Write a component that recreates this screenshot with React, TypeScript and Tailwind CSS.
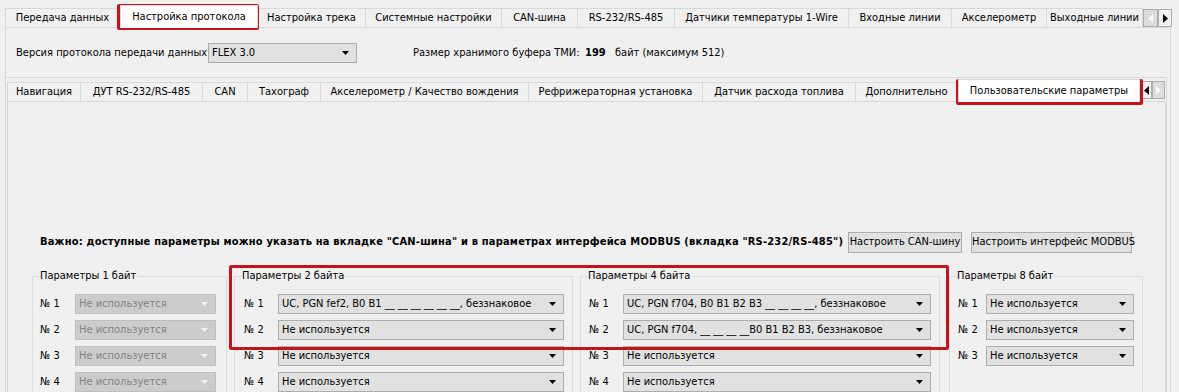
import React from "react";

type TabItem = { label: string; w: string; active?: boolean; first?: boolean };

const topTabs: TabItem[] = [
  { label: "Передача данных", w: "w-[115px]", first: true },
  { label: "Настройка протокола", w: "w-[138px]", active: true },
  { label: "Настройка трека", w: "w-[108px]" },
  { label: "Системные настройки", w: "w-[136px]" },
  { label: "CAN-шина", w: "w-[76px]" },
  { label: "RS-232/RS-485", w: "w-[97px]" },
  { label: "Датчики температуры 1-Wire", w: "w-[174px]" },
  { label: "Входные линии", w: "w-[103px]" },
  { label: "Акселерометр", w: "w-[95px]" },
  { label: "Выходные линии", w: "w-[96px]" },
];

const subTabs: TabItem[] = [
  { label: "Навигация", w: "w-[74px]", first: true },
  { label: "ДУТ RS-232/RS-485", w: "w-[122px]" },
  { label: "CAN", w: "w-[45px]" },
  { label: "Тахограф", w: "w-[73px]" },
  { label: "Акселерометр / Качество вождения", w: "w-[208px]" },
  { label: "Рефрижераторная установка", w: "w-[174px]" },
  { label: "Датчик расхода топлива", w: "w-[153px]" },
  { label: "Дополнительно", w: "w-[102px]" },
  { label: "Пользовательские параметры", w: "w-[182px]", active: true },
];

const Tab = ({ label, w, active, first }: TabItem) =>
  active ? (
    <div
      className={`${w} h-[23px] -mb-px relative z-10 flex items-center justify-center bg-white border border-b-0 border-[#d9d9d9] whitespace-nowrap`}
    >
      {label}
    </div>
  ) : (
    <div
      className={`${w} h-[19px] flex items-center justify-center border-t border-r border-[#d9d9d9] bg-[#f0f0f0] whitespace-nowrap overflow-hidden ${
        first ? "border-l" : ""
      }`}
    >
      {label}
    </div>
  );

const Arrow = ({ dir, enabled, w }: { dir: "left" | "right"; enabled: boolean; w: string }) => (
  <div
    className={`${w} h-[18px] flex items-center justify-center border border-[#adadad] ${
      enabled ? "bg-[#f0f0f0]" : "bg-[#dcdcdc]"
    }`}
  >
    <svg width="5" height="9" viewBox="0 0 5 9">
      {dir === "left" ? (
        <polygon points="5,0 5,9 0,4.5" fill={enabled ? "#000" : "#f7f7f7"} />
      ) : (
        <polygon points="0,0 0,9 5,4.5" fill={enabled ? "#000" : "#f7f7f7"} />
      )}
    </svg>
  </div>
);

const Select = ({
  value,
  w,
  disabled,
}: {
  value: string;
  w: string;
  disabled?: boolean;
}) => (
  <div
    className={`${w} h-[20px] flex items-center justify-between pl-[3px] pr-[7px] border whitespace-nowrap ${
      disabled
        ? "bg-[#cccccc] border-[#bfbfbf] text-[#838383]"
        : "bg-[#e1e1e1] border-[#adadad] text-black"
    }`}
  >
    <span>{value}</span>
    <svg width="7" height="4" viewBox="0 0 7 4">
      <polygon points="0,0 7,0 3.5,4" fill={disabled ? "#f2f2f2" : "#000"} />
    </svg>
  </div>
);

type Group = {
  title: string;
  w: string;
  ml: string;
  pl: string;
  labelW: string;
  selectW: string;
  rows: { value: string; disabled?: boolean }[];
};

const NOT_USED = "Не используется";

const groups: Group[] = [
  {
    title: "Параметры 1 байт",
    w: "w-[195px]",
    ml: "ml-0",
    pl: "pl-[7px]",
    labelW: "w-[35px]",
    selectW: "w-[141px]",
    rows: [1, 2, 3, 4].map(() => ({ value: NOT_USED, disabled: true })),
  },
  {
    title: "Параметры 2 байта",
    w: "w-[339px]",
    ml: "ml-[7px]",
    pl: "pl-[9px]",
    labelW: "w-[34px]",
    selectW: "w-[286px]",
    rows: [
      { value: "UC, PGN fef2, B0 B1 __ __ __ __ __ __, беззнаковое" },
      { value: NOT_USED },
      { value: NOT_USED },
      { value: NOT_USED },
    ],
  },
  {
    title: "Параметры 4 байта",
    w: "w-[360px]",
    ml: "ml-[7px]",
    pl: "pl-[8px]",
    labelW: "w-[34px]",
    selectW: "w-[308px]",
    rows: [
      { value: "UC, PGN f704, B0 B1 B2 B3 __ __ __ __, беззнаковое" },
      { value: "UC, PGN f704, __ __ __ __B0 B1 B2 B3, беззнаковое" },
      { value: NOT_USED },
      { value: NOT_USED },
    ],
  },
  {
    title: "Параметры 8 байт",
    w: "w-[194px]",
    ml: "ml-[9px]",
    pl: "pl-[8px]",
    labelW: "w-[28px]",
    selectW: "w-[148px]",
    rows: [{ value: NOT_USED }, { value: NOT_USED }, { value: NOT_USED }],
  },
];

const GroupBox = ({ g }: { g: Group }) => (
  <fieldset className={`${g.w} ${g.ml} h-[140px] border border-[#dcdcdc]`}>
    <legend className="ml-[6px] px-[1px] h-[14px] leading-[14px] whitespace-nowrap">{g.title}</legend>
    <div className={`${g.pl} pt-[11px] flex flex-col gap-[6px]`}>
      {g.rows.map((r, i) => (
        <div key={i} className="flex items-center">
          <span className={`${g.labelW} whitespace-nowrap`}>№ {i + 1}</span>
          <Select value={r.value} w={g.selectW} disabled={r.disabled} />
        </div>
      ))}
    </div>
  </fieldset>
);

export default function App() {
  return (
    <div className="relative w-[1179px] h-[392px] overflow-hidden bg-[#f0f0f0] text-black text-[11px] font-['DejaVu_Sans_Condensed','DejaVu_Sans',sans-serif]">
      {/* main tabs */}
      <div className="flex items-end h-[27px] pl-[5px]">
        {topTabs.map((t) => (
          <Tab key={t.label} {...t} />
        ))}
        <div className="flex self-end mb-0">
          <Arrow dir="left" enabled={false} w="w-[15px]" />
          <Arrow dir="right" enabled w="w-[14px]" />
        </div>
      </div>

      {/* main tab page */}
      <div className="ml-[5px] w-[1166px] h-[365px] border-t border-l border-r border-[#d9d9d9]">
        <div className="flex items-center pt-[14px] pl-[10px] h-[36px] whitespace-nowrap">
          <span className="w-[192px]">Версия протокола передачи данных</span>
          <Select value="FLEX 3.0" w="w-[149px]" />
          <span className="ml-[56px] w-[172px]">Размер хранимого буфера ТМИ:</span>
          <span className="w-[30px] font-bold">199</span>
          <span>байт (максимум 512)</span>
        </div>

        <div className="mt-[13px] w-[1161px] h-[320px] border-t border-r border-[#d9d9d9]">
          {/* sub tabs */}
          <div className="flex items-end h-[23px] pl-[1px]">
            {subTabs.map((t) => (
              <Tab key={t.label} {...t} />
            ))}
            <div className="flex mb-[2px]">
              <Arrow dir="left" enabled w="w-[12px]" />
              <Arrow dir="right" enabled={false} w="w-[13px]" />
            </div>
          </div>

          <div className="ml-[1px] w-[1159px] h-[300px] border-t border-l border-r border-[#d9d9d9]">
            <div className="flex items-center mt-[130px] pl-[32px] h-[21px] whitespace-nowrap">
              <span className="w-[808px] font-bold tracking-[0.2px]">
                Важно: доступные параметры можно указать на вкладке "CAN-шина" и в параметрах интерфейса MODBUS (вкладка "RS-232/RS-485")
              </span>
              <button className="w-[114px] h-[21px] border border-[#adadad] bg-[#e1e1e1]">Настроить CAN-шину</button>
              <button className="ml-[9px] w-[161px] h-[21px] border border-[#adadad] bg-[#e1e1e1]">
                Настроить интерфейс MODBUS
              </button>
            </div>

            <div className="flex mt-[16px] pl-[24px]">
              {groups.map((g) => (
                <GroupBox key={g.title} g={g} />
              ))}
            </div>
          </div>
        </div>
      </div>

      {/* red highlight frames */}
      <div className="absolute left-[117px] top-[4px] w-[142px] h-[26px] border-[3px] border-[#c4141b] rounded-[2px] pointer-events-none" />
      <div className="absolute left-[956px] top-[79px] w-[187px] h-[26px] border-[3px] border-[#c4141b] rounded-[2px] pointer-events-none" />
      <div className="absolute left-[229px] top-[265px] w-[720px] h-[85px] border-[3px] border-[#c4141b] rounded-[2px] pointer-events-none" />
    </div>
  );
}
